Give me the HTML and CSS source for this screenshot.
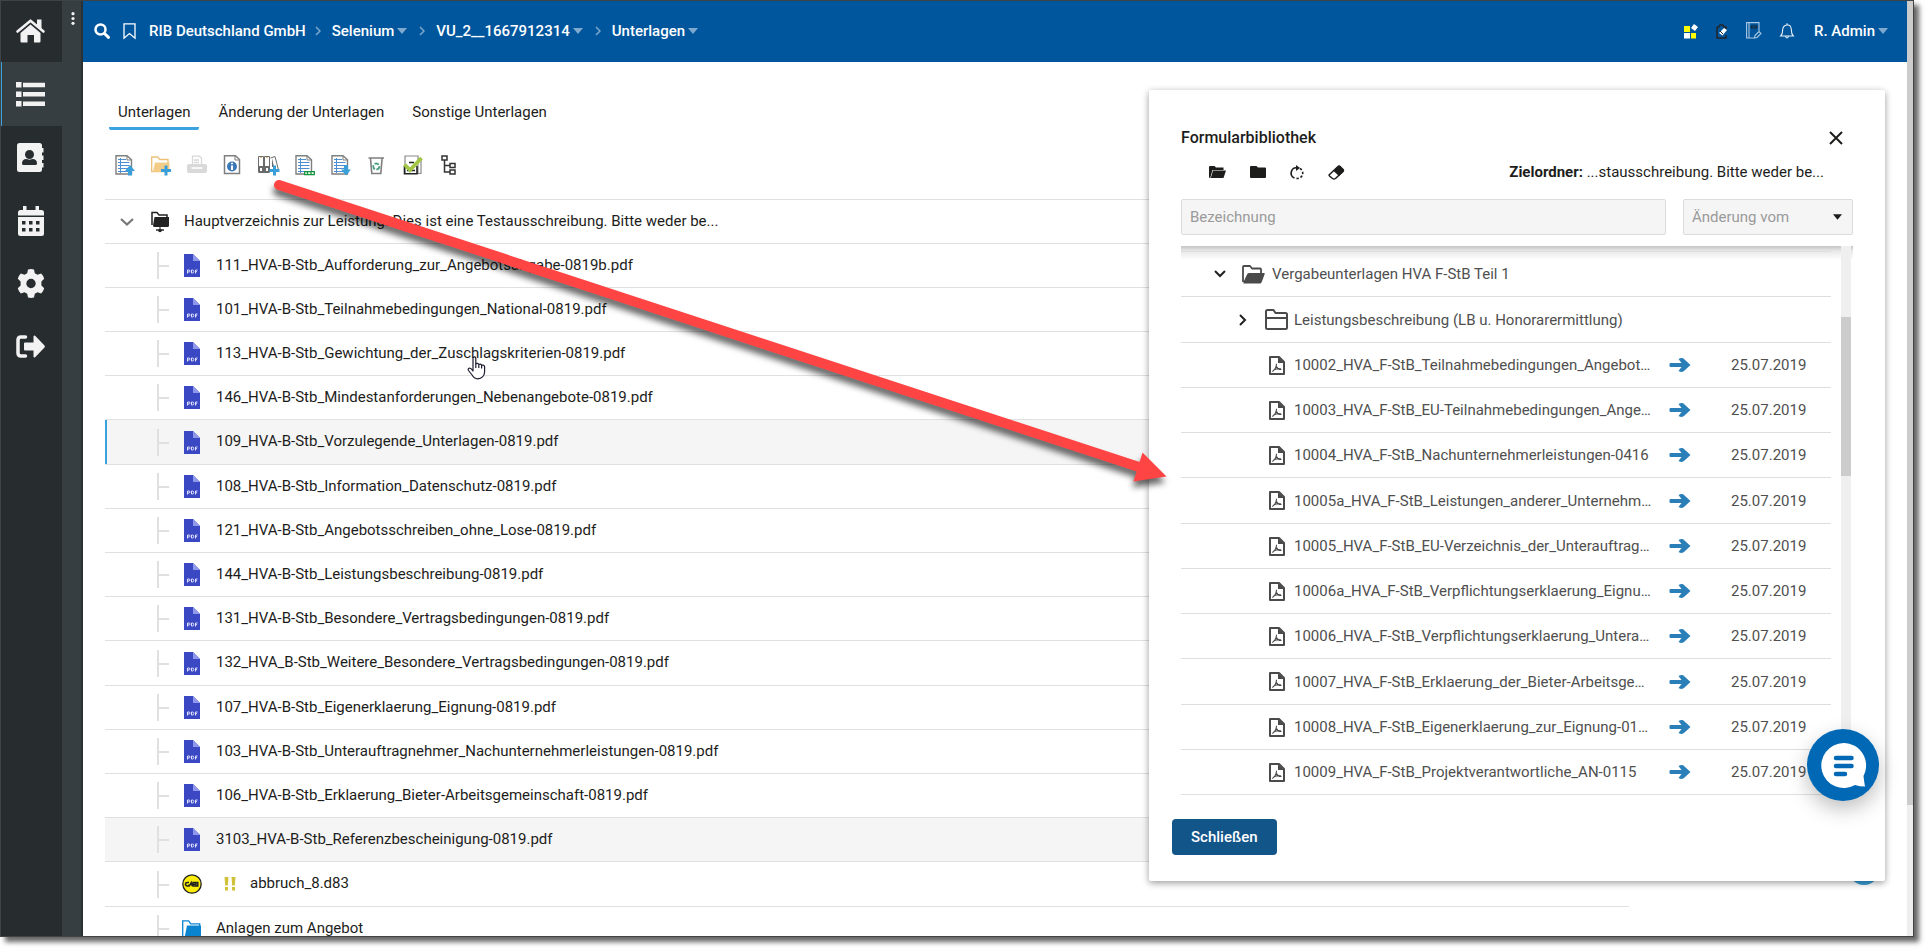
FILE: index.html
```html
<!DOCTYPE html>
<html lang="de">
<head>
<meta charset="utf-8">
<title>Unterlagen</title>
<link rel="stylesheet" href="styles.css">
</head>
<body>
<svg class="sprite" aria-hidden="true">
  <symbol id="pdf" viewBox="0 0 16 23">
    <path fill="#3b48c4" d="M0 0h9l7 7v16H0z"/><path fill="#8f98ea" d="M9 0l7 7H9z"/>
    <g fill="none" stroke="#dfe2fa" stroke-width="1"><path d="M3.500 19.500v-3.500h1.500a1 1 0 0 1 0 2H3.500M7.500 16v3h.8a1.500 1.500 0 0 0 0-3zM11.500 19.500V16h2M11.500 17.700h1.600"/></g>
  </symbol>
  <symbol id="fpdf" viewBox="0 0 16 19">
    <path fill="none" stroke="#4a4a4a" stroke-width="2" stroke-linejoin="round" d="M1 1h9l5 5v12H1z"/>
    <path fill="#4a4a4a" d="M9 1l6 6H9z"/>
    <path fill="none" stroke="#4a4a4a" stroke-width="1.100" d="M3.300 15.500c2-1 4.300-4.500 4.200-7.700M7.500 10.500c.8 2 2.500 3.200 5 3M4.500 14c2-1 4-1.600 7.500-1.200"/>
  </symbol>
  <symbol id="arrow" viewBox="0 0 21 14">
    <path fill="#2a7fb8" d="M1 5h11L9 1q4-2 6 .5L21 7l-6 5.500Q13 15 9 13l3-4H1Q0 9 0 7.500V6Q0 5 1 5z"/>
  </symbol>
  <symbol id="caret" viewBox="0 0 10 6"><path fill="currentColor" d="M0 0h10L5 6z"/></symbol>
  <symbol id="sep" viewBox="0 0 6 10"><path fill="none" stroke="currentColor" stroke-width="1.500" d="M1 1l4 4-4 4"/></symbol>
  <symbol id="sheet" viewBox="0 0 20 20">
    <path fill="#fff" stroke="#7f7f7f" stroke-width="1.400" d="M1 .7h11l4.500 4V19H1z"/><path fill="none" stroke="#7f7f7f" d="M12 1v4h4"/>
    <path fill="none" stroke="#4d8fd0" d="M3 4.500h8M3 7.500h11.500M3 10.500h11.500M3 13.500h11.500M3 16.500h11.500"/><path stroke="#4d8fd0" d="M5.500 3v15"/>
  </symbol>
</svg>

<div class="window">
  <nav class="rail" aria-label="Hauptnavigation">
    <a class="rail-item rail-home" href="#" aria-label="Start"><svg width="29" height="24" viewBox="0 0 29 24"><path fill="none" stroke="#f2f2f2" stroke-width="2.600" stroke-linecap="round" stroke-linejoin="round" d="M1.500 12.500l13-10.800 13 10.800"/><path fill="#f2f2f2" d="M21 .5h4.500V10L21 6.500zM4.500 14l10-8.500 10 8.500v8.500a1 1 0 0 1-1 1H18V16h-6.500v7.500h-6a1 1 0 0 1-1-1z"/></svg></a>
    <a class="rail-item rail-active" href="#" aria-label="Liste"><svg width="29" height="25" viewBox="0 0 29 25"><path fill="#f2f2f2" d="M0 0h5.500v5.500H0zM7 .7h22v4.500H7zM0 9.500h5.500V15H0zM7 10h22v4.500H7zM0 19h5.500v5.500H0zM7 19.500h22V24H7z"/></svg></a>
    <a class="rail-item" href="#" aria-label="Kontakte"><svg width="27" height="29" viewBox="0 0 27 29"><path fill="#f2f2f2" fill-rule="evenodd" d="M2.500 0h20A2.500 2.500 0 0 1 25 2.500V5h1.500v4.500H25v3h1.500V17H25v3h1.500v4.500H25v2a2.500 2.500 0 0 1-2.500 2.500h-20A2.500 2.500 0 0 1 0 26.500v-24A2.500 2.500 0 0 1 2.500 0zM12.500 7a4.500 4.500 0 1 0 .01 9 4.500 4.500 0 1 0 0-9zM5 20.500Q5 22 6.500 22h12q1.500 0 1.500-1.500 0-4.500-4.500-4.500l-3 .8-3-.8Q5 16 5 20.500z"/></svg></a>
    <a class="rail-item" href="#" aria-label="Kalender"><svg width="26" height="30" viewBox="0 0 26 30"><path fill="#f2f2f2" fill-rule="evenodd" d="M5 0h3.500v4h9V0H21v4h2.500A2.500 2.500 0 0 1 26 6.500V9.500H0v-3A2.500 2.500 0 0 1 2.500 4H5zM0 11h26v16.500a2.500 2.500 0 0 1-2.500 2.500h-21A2.500 2.500 0 0 1 0 27.500zM4 15v3.500h3.500V15zm7 0v3.500h3.500V15zm7 0v3.500h3.500V15zM4 22v3.500h3.500V22zm7 0v3.500h3.500V22zm7 0v3.500h3.500V22z"/></svg></a>
    <a class="rail-item" href="#" aria-label="Einstellungen"><svg width="28" height="29" viewBox="0 0 28 29"><g fill="#f2f2f2"><path fill-rule="evenodd" d="M11 0.500Q14 -.3 17 .5l.8 3.700 2.700 1.600 3.700-1.200q2.300 2.300 3 5.200l-2.800 2.600v4.200l2.800 2.600q-.8 3-3 5.200l-3.700-1.200-2.700 1.600-.8 3.700q-3 .8-6 0l-.8-3.700-2.700-1.600-3.700 1.200q-2.300-2.300-3-5.200l2.800-2.600v-4.200L.8 9.800q.8-3 3-5.200l3.700 1.200 2.700-1.600zM14 9.800a4.700 4.700 0 1 0 .01 9.400A4.700 4.700 0 1 0 14 9.800z"/></g></svg></a>
    <a class="rail-item" href="#" aria-label="Abmelden"><svg width="29" height="23" viewBox="0 0 29 23"><path fill="none" stroke="#f2f2f2" stroke-width="3.500" stroke-linecap="round" d="M9.500 2H5Q2 2 2 5v13q0 3 3 3h4.500"/><path fill="#f2f2f2" d="M9 7.500h8.500V1.200q.6-1 1.600-.4L28.500 10.500q.8 1 0 2L19.100 22.200q-1 .6-1.600-.4V15.500H9q-1 0-1-1v-6q0-1 1-1z"/></svg></a>
  </nav>
  <div class="gutter"><button class="dots" aria-label="Mehr"><svg width="4" height="13" viewBox="0 0 4 13"><g fill="#f2f2f2"><circle cx="2" cy="1.700" r="1.600"/><circle cx="2" cy="6.500" r="1.600"/><circle cx="2" cy="11.300" r="1.600"/></g></svg></button></div>

  <div class="main">
    <header class="topbar">
      <button class="icon-btn" aria-label="Suche"><svg width="16" height="16" viewBox="0 0 16 16"><circle cx="6.500" cy="6.500" r="5" fill="none" stroke="#fff" stroke-width="2.500"/><path stroke="#fff" stroke-width="3" stroke-linecap="round" d="M10.500 10.500l4 3.800"/></svg></button>
      <button class="icon-btn mark" aria-label="Lesezeichen"><svg width="13" height="16" viewBox="0 0 13 16"><path fill="none" stroke="#fff" stroke-width="1.300" d="M1 .8h11v14.400L6.500 10.500 1 15.200z"/></svg></button>
      <ol class="crumbs">
        <li><a href="#">RIB Deutschland GmbH</a></li>
        <li><svg class="sep"><use href="#sep"/></svg><a href="#">Selenium</a><svg class="caret"><use href="#caret"/></svg></li>
        <li><svg class="sep"><use href="#sep"/></svg><a href="#">VU_2__1667912314</a><svg class="caret"><use href="#caret"/></svg></li>
        <li><svg class="sep"><use href="#sep"/></svg><a href="#">Unterlagen</a><svg class="caret"><use href="#caret"/></svg></li>
      </ol>
      <div class="top-actions">
        <button class="icon-btn" aria-label="Apps"><svg width="14" height="16" viewBox="0 0 14 16"><path fill="#ff0" d="M0 3h6v6H0zM7 10h5v5.500H7z"/><path fill="#fff" d="M0 10h6v5.500H0zM10 1l4 3-3 4-4-3z"/></svg></button>
        <button class="icon-btn" aria-label="Aufgaben"><svg width="12" height="16" viewBox="0 0 12 16"><path fill="none" stroke="#20262b" stroke-width="1.500" d="M1 4h2l1-2h3l1 2h2v3M1 4v11h9v-3"/><path fill="#fff" d="M3 10l5-5 3 2-4.500 5.500z"/><path stroke="#20262b" d="M4 8l3 3"/></svg></button>
        <button class="icon-btn" aria-label="Protokoll"><svg width="16" height="17" viewBox="0 0 16 17"><path fill="none" stroke="#a9c8e4" stroke-width="1.100" d="M8 16H.6V.6H13v9M3 .6V16M9 13.500l4-4 2 2-4 4-2.500.5z"/><path fill="none" stroke="#1b2730" stroke-width="1.200" d="M5.500 4h5v2h-5z"/></svg></button>
        <button class="icon-btn" aria-label="Benachrichtigungen"><svg width="14" height="16" viewBox="0 0 14 16"><path fill="none" stroke="#e8f1f8" stroke-width="1.100" d="M.7 13q2-2 2-6.500Q3 2.500 7 2t4.300 4.500Q11.300 11 13.300 13zM5.500 13.500q1.500 3 3 0M7 .3V2"/></svg></button>
        <button class="user">R. Admin<svg class="caret"><use href="#caret"/></svg></button>
      </div>
    </header>

    <main class="content">
      <nav class="tabs" aria-label="Bereiche">
        <a class="tab tab-active" href="#">Unterlagen</a>
        <a class="tab" href="#">Änderung der Unterlagen</a>
        <a class="tab" href="#">Sonstige Unterlagen</a>
      </nav>
      <div class="tools">
        <button class="tool" aria-label="Hochladen"><svg viewBox="0 0 20 20"><use href="#sheet"/><path fill="#3a9fd8" d="M15 10l5 6h-3v4.500h-4V16h-3z"/></svg></button>
        <button class="tool" aria-label="Neuer Ordner"><svg viewBox="0 0 20 20"><path fill="#fff" stroke="#edc078" stroke-width="1.300" d="M.7 16.500V2h6l2 2.500H17v12z"/><path fill="#f3cd88" d="M4 7.500h14.500V17H2z"/><path fill="#3a9fd8" d="M13.500 10.500h3v3.500H20v3h-3.500v3.500h-3V17H10v-3h3.500z"/></svg></button>
        <button class="tool" aria-label="Drucken"><svg viewBox="0 0 20 20"><path fill="none" stroke="#d9d9d9" stroke-width="1.300" d="M5.500 9V1.200h7l2 2V9M7 5h5M7 7.500h5"/><rect y="9" width="20" height="9" rx="2" fill="#d9d9d9"/><path stroke="#fff" stroke-width="1.500" d="M4.500 13h11"/></svg></button>
        <button class="tool" aria-label="Info"><svg viewBox="0 0 20 20"><path fill="#fff" stroke="#7f7f7f" stroke-width="1.500" d="M1.500 .8h11l4 3.700v14h-15z"/><path fill="none" stroke="#7f7f7f" d="M12 1v4h4"/><circle cx="9" cy="11.500" r="5" fill="#3d78b8"/><path stroke="#fff" stroke-width="2" d="M9 10.500V15M9 7.700v1.600"/></svg></button>
        <button class="tool" aria-label="Formularbibliothek"><svg viewBox="0 0 20 20"><path fill="#fff" stroke="#6b6b6b" d="M-.5 1.500h5V17h-5zM5.500 1.500h5V17h-5zM11.500 3L16 1.500 19.500 15"/><path fill="#6b6b6b" d="M-.5 11h11v7h-11zM13 3v9h2z"/><path fill="#fff" d="M1 13h2v3H1zM7 13h2v3H7z"/><path stroke="#f1c27a" d="M1 2.500h2M7 2.500h2"/><path fill="#3a9fd8" d="M14 10.500h3V14h3.500v3H17v3.500h-3V17h-3.500v-3H14z"/></svg></button>
        <button class="tool" aria-label="Liste prüfen"><svg viewBox="0 0 20 20"><use href="#sheet"/><path fill="#f5fff8" stroke="#14943f" stroke-width="1.300" d="M9.700 16.700h9.600v3H9.700zM12.500 16.500v3M16 16.500v3"/></svg></button>
        <button class="tool" aria-label="Herunterladen"><svg viewBox="0 0 20 20"><use href="#sheet"/><path fill="#3a9fd8" d="M15 20.500l-5-6h3V10h4v4.500h3z"/></svg></button>
        <button class="tool" aria-label="Löschen"><svg viewBox="0 0 20 20"><path fill="none" stroke="#7f7f7f" stroke-width="1.600" d="M1.500 3h15.500M3.500 3.500l1.300 15h9l1.300-15"/><circle cx="9.300" cy="11.500" r="3" fill="none" stroke="#48a07d" stroke-width="1.800" stroke-dasharray="4.500 1.500"/></svg></button>
        <button class="tool" aria-label="Bestätigen"><svg viewBox="0 0 20 20"><path fill="#fff" stroke="#8a8a8a" stroke-width="1.200" d="M2 1h13v17.500H2zM15 4h3v14.500h-3"/><path fill="none" stroke="#222" stroke-width="1.600" d="M1.500 11v7.700h12.500V11M4 15.500h8M6 7.500h5"/><path fill="none" stroke="#a3c644" stroke-width="3.800" d="M1.500 9.500L7 15 18.500 3"/></svg></button>
        <button class="tool" aria-label="Struktur"><svg viewBox="0 0 20 20"><path fill="none" stroke="#333" stroke-width="1.500" d="M3 1h5v4H3zM11 8.500h5v4h-5zM11 15h5v4h-5zM5.500 5v12H11M5.500 10.500H11"/></svg></button>
      </div>
      <ul class="tree">
        <li class="node root"><button class="twist" aria-label="Einklappen"><svg width="14" height="8" viewBox="0 0 14 8"><path fill="none" stroke="#777" stroke-width="2.200" d="M1 1l6 5.500L13 1"/></svg></button><svg class="root-icon" width="18" height="22" viewBox="0 0 18 22"><path fill="none" stroke="#222" stroke-width="1.500" d="M1 14V1.500h5L8 4h8v3"/><path fill="#222" d="M3.500 6H18v8.500q0 1.500-1.500 1.500h-13Q2 16 2 14.500zM8.500 16h1v2h-1z"/><path stroke="#222" stroke-width="1.400" d="M5 19h8"/><circle cx="9" cy="19.500" r="1.800" fill="#222"/></svg><span>Hauptverzeichnis zur Leistung. Dies ist eine Testausschreibung. Bitte weder be...</span></li>
        <li class="node"><i class="branch"></i><svg class="pdf"><use href="#pdf"/></svg><span>111_HVA-B-Stb_Aufforderung_zur_Angebotsabgabe-0819b.pdf</span></li>
        <li class="node"><i class="branch"></i><svg class="pdf"><use href="#pdf"/></svg><span>101_HVA-B-Stb_Teilnahmebedingungen_National-0819.pdf</span></li>
        <li class="node"><i class="branch"></i><svg class="pdf"><use href="#pdf"/></svg><span>113_HVA-B-Stb_Gewichtung_der_Zuschlagskriterien-0819.pdf</span></li>
        <li class="node"><i class="branch"></i><svg class="pdf"><use href="#pdf"/></svg><span>146_HVA-B-Stb_Mindestanforderungen_Nebenangebote-0819.pdf</span></li>
        <li class="node selected"><i class="branch"></i><svg class="pdf"><use href="#pdf"/></svg><span>109_HVA-B-Stb_Vorzulegende_Unterlagen-0819.pdf</span></li>
        <li class="node"><i class="branch"></i><svg class="pdf"><use href="#pdf"/></svg><span>108_HVA-B-Stb_Information_Datenschutz-0819.pdf</span></li>
        <li class="node"><i class="branch"></i><svg class="pdf"><use href="#pdf"/></svg><span>121_HVA-B-Stb_Angebotsschreiben_ohne_Lose-0819.pdf</span></li>
        <li class="node"><i class="branch"></i><svg class="pdf"><use href="#pdf"/></svg><span>144_HVA-B-Stb_Leistungsbeschreibung-0819.pdf</span></li>
        <li class="node"><i class="branch"></i><svg class="pdf"><use href="#pdf"/></svg><span>131_HVA-B-Stb_Besondere_Vertragsbedingungen-0819.pdf</span></li>
        <li class="node"><i class="branch"></i><svg class="pdf"><use href="#pdf"/></svg><span>132_HVA_B-Stb_Weitere_Besondere_Vertragsbedingungen-0819.pdf</span></li>
        <li class="node"><i class="branch"></i><svg class="pdf"><use href="#pdf"/></svg><span>107_HVA-B-Stb_Eigenerklaerung_Eignung-0819.pdf</span></li>
        <li class="node"><i class="branch"></i><svg class="pdf"><use href="#pdf"/></svg><span>103_HVA-B-Stb_Unterauftragnehmer_Nachunternehmerleistungen-0819.pdf</span></li>
        <li class="node"><i class="branch"></i><svg class="pdf"><use href="#pdf"/></svg><span>106_HVA-B-Stb_Erklaerung_Bieter-Arbeitsgemeinschaft-0819.pdf</span></li>
        <li class="node marked"><i class="branch"></i><svg class="pdf"><use href="#pdf"/></svg><span>3103_HVA-B-Stb_Referenzbescheinigung-0819.pdf</span></li>
        <li class="node"><i class="branch"></i><svg class="gaeb" width="20" height="20" viewBox="0 0 20 20"><circle cx="10" cy="10" r="9.200" fill="#ffee0a" stroke="#222" stroke-width="1.300"/><path fill="none" stroke="#222" stroke-width="1.500" d="M7 8.500H5.500q-2 0-2 1.700t2 1.700H7v-1.500M7.500 12l1.700-3.500 1 3.500M13.500 8.500H11v3.400h2.500M11 10.200h2.500M14 8.500h1.800v3.400H14z"/></svg><svg class="warn" width="12" height="14" viewBox="0 0 12 14"><path fill="#d0c238" d="M0.500 0h4l-.7 8.500H1.200zM7.500 0h4l-.7 8.500H8.200zM1 10h3v3.500H1zM8 10h3v3.500H8z"/></svg><span>abbruch_8.d83</span></li>
        <li class="node"><i class="branch"></i><svg class="folder" width="19" height="18" viewBox="0 0 19 18"><path fill="none" stroke="#0b84d0" stroke-width="1.300" d="M.7 17V.8h6l2 3h9V6"/><path fill="#0b84d0" d="M5 5.500h14V16q0 2-2 2H2.500z"/></svg><span>Anlagen zum Angebot</span></li>
      </ul>
    </main>
  </div>
  <div class="page-scroll"><div class="page-thumb"></div></div>

  <div class="round-tip"></div>

  <section class="dialog" role="dialog" aria-labelledby="dlg-title">
    <div class="dlg-head"><h2 id="dlg-title">Formularbibliothek</h2><button class="close" aria-label="Fenster schließen"><svg width="14" height="14" viewBox="0 0 14 14"><path stroke="#1d1d1b" stroke-width="2" d="M1 1l12 12M13 1L1 13"/></svg></button></div>
    <div class="dlg-tools">
      <button aria-label="Alle öffnen"><svg width="17" height="13" viewBox="0 0 17 13"><path fill="#1d1d1b" d="M1 0h4.500l1.500 1.500h7.500V4H3.500L1.500 11V12H1Q0 12 0 11V1Q0 0 1 0z"/><path fill="#1d1d1b" d="M4 4.500h13L14.500 12H1.800z"/></svg></button>
      <button aria-label="Alle schließen"><svg width="16" height="13" viewBox="0 0 16 13"><path fill="#1d1d1b" d="M1 0h5.500L8 1.500h7q1 0 1 1V11q0 1-1 1H1q-1 0-1-1V1q0-1 1-1z"/></svg></button>
      <button aria-label="Aktualisieren"><svg width="14" height="15" viewBox="0 0 14 15"><path fill="none" stroke="#1d1d1b" stroke-width="1.600" d="M7 2.800A5.300 5.300 0 0 0 4.500 13"/><path fill="none" stroke="#1d1d1b" stroke-width="1.600" stroke-dasharray="2.300 1.800" d="M6.500 13.400A5.300 5.300 0 0 0 9.500 3.300"/><path fill="#1d1d1b" d="M6 0l4 3-4 3z"/></svg></button>
      <button aria-label="Filter leeren"><svg width="17" height="15" viewBox="0 0 17 15"><path fill="none" stroke="#1d1d1b" stroke-width="1.500" stroke-linejoin="round" d="M1 10L10 1.500q1-1 2 0l3 3q1 1 0 2L7.500 13.500q-1.500 1-3 0L1.500 11z"/><path fill="#1d1d1b" d="M10.500.8h1.500l4 4v1.500l-5 4.700L5.500 6z"/></svg></button>
      <p class="target"><strong>Zielordner:</strong> ...stausschreibung. Bitte weder be...</p>
    </div>
    <div class="filters">
      <input class="field" type="text" placeholder="Bezeichnung" aria-label="Bezeichnung">
      <div class="select-wrap"><select class="field" aria-label="Änderung vom"><option>Änderung vom</option></select><svg class="select-caret"><use href="#caret"/></svg></div>
    </div>
    <div class="lib">
      <ul class="lib-list">
        <li class="entry folder-open"><svg width="12" height="8" viewBox="0 0 12 8"><path fill="none" stroke="#222" stroke-width="2" d="M1 1l5 5 5-5"/></svg><svg width="23" height="19" viewBox="0 0 23 19"><path fill="none" stroke="#4a4a4a" stroke-width="1.800" stroke-linejoin="round" d="M1 17V2q0-1 1-1h6l2 2.500h8q1 0 1 1V8"/><path fill="#4a4a4a" d="M7 8h15q1 0 .7 1l-3 8q-.5 1.500-2 1.500H2Q1 18.500 1.500 17L5 9.500Q5.500 8 7 8z"/></svg><span>Vergabeunterlagen HVA F-StB Teil 1</span></li>
        <li class="entry folder-closed"><svg width="8" height="12" viewBox="0 0 8 12"><path fill="none" stroke="#222" stroke-width="2" d="M1 1l5 5-5 5"/></svg><svg width="23" height="21" viewBox="0 0 23 21"><path fill="none" stroke="#4a4a4a" stroke-width="2" stroke-linejoin="round" d="M1 18.500V2.500Q1 1 2.500 1h6l2 3h10q1.500 0 1.500 1.500v13q0 1.500-1.500 1.500h-18Q1 20 1 18.500zM1 9h21"/></svg><span>Leistungsbeschreibung (LB u. Honorarermittlung)</span></li>
        <li class="entry"><svg class="fpdf"><use href="#fpdf"/></svg><span class="name">10002_HVA_F-StB_Teilnahmebedingungen_Angebot…</span><button class="add" aria-label="Übernehmen"><svg><use href="#arrow"/></svg></button><time>25.07.2019</time></li>
        <li class="entry"><svg class="fpdf"><use href="#fpdf"/></svg><span class="name">10003_HVA_F-StB_EU-Teilnahmebedingungen_Ange…</span><button class="add" aria-label="Übernehmen"><svg><use href="#arrow"/></svg></button><time>25.07.2019</time></li>
        <li class="entry"><svg class="fpdf"><use href="#fpdf"/></svg><span class="name">10004_HVA_F-StB_Nachunternehmerleistungen-0416</span><button class="add" aria-label="Übernehmen"><svg><use href="#arrow"/></svg></button><time>25.07.2019</time></li>
        <li class="entry"><svg class="fpdf"><use href="#fpdf"/></svg><span class="name">10005a_HVA_F-StB_Leistungen_anderer_Unternehm…</span><button class="add" aria-label="Übernehmen"><svg><use href="#arrow"/></svg></button><time>25.07.2019</time></li>
        <li class="entry"><svg class="fpdf"><use href="#fpdf"/></svg><span class="name">10005_HVA_F-StB_EU-Verzeichnis_der_Unterauftrag…</span><button class="add" aria-label="Übernehmen"><svg><use href="#arrow"/></svg></button><time>25.07.2019</time></li>
        <li class="entry"><svg class="fpdf"><use href="#fpdf"/></svg><span class="name">10006a_HVA_F-StB_Verpflichtungserklaerung_Eignu…</span><button class="add" aria-label="Übernehmen"><svg><use href="#arrow"/></svg></button><time>25.07.2019</time></li>
        <li class="entry"><svg class="fpdf"><use href="#fpdf"/></svg><span class="name">10006_HVA_F-StB_Verpflichtungserklaerung_Untera…</span><button class="add" aria-label="Übernehmen"><svg><use href="#arrow"/></svg></button><time>25.07.2019</time></li>
        <li class="entry"><svg class="fpdf"><use href="#fpdf"/></svg><span class="name">10007_HVA_F-StB_Erklaerung_der_Bieter-Arbeitsge…</span><button class="add" aria-label="Übernehmen"><svg><use href="#arrow"/></svg></button><time>25.07.2019</time></li>
        <li class="entry"><svg class="fpdf"><use href="#fpdf"/></svg><span class="name">10008_HVA_F-StB_Eigenerklaerung_zur_Eignung-01…</span><button class="add" aria-label="Übernehmen"><svg><use href="#arrow"/></svg></button><time>25.07.2019</time></li>
        <li class="entry"><svg class="fpdf"><use href="#fpdf"/></svg><span class="name">10009_HVA_F-StB_Projektverantwortliche_AN-0115</span><button class="add" aria-label="Übernehmen"><svg><use href="#arrow"/></svg></button><time>25.07.2019</time></li>
      </ul>
      <div class="lib-track"><div class="lib-thumb"></div></div>
    </div>
    <div class="dlg-foot"><button class="primary">Schließen</button></div>
  </section>

  <button class="chat" aria-label="Chat"><svg width="45" height="45" viewBox="0 0 45 45"><path fill="#fff" d="M22.500 0a22.500 22.500 0 0 1 20 33q.5 5 1.500 10.500-5 0-10-1.500A22.500 22.500 0 1 1 22.500 0z"/><path stroke="#0068b4" stroke-width="4.500" stroke-linecap="round" d="M15 15h15.500M15 23h15.500M15 31h9"/></svg></button>

  <svg class="pointer-arrow" width="920" height="330" viewBox="0 0 920 330" aria-hidden="true"><g fill="#ff4444"><path stroke="#ff4444" stroke-width="10" stroke-linecap="round" d="M18 15l863 283"/><path d="M881.500 282.500l24 24-33 5z"/></g></svg>
  <svg class="hand" width="19" height="24" viewBox="0 0 19 24" aria-hidden="true"><path fill="#fff" stroke="#1a1a2e" stroke-width="1.200" stroke-linejoin="round" d="M6 14V2.500q0-1.700 1.400-1.700T8.800 2.500V8q2-1.500 3 .5 2-1 2.800.7 2.600-.7 3 1.500V16q-.6 6.500-7 6.800-3.500 0-5.500-3.800L1.500 14.500Q.5 12.500 2.500 12q1.500 0 3.500 3zM8.800 8v4M11.800 9v3M14.600 9.500v3"/></svg>
</div>
</body>
</html>
```

FILE: styles.css
```css
* { box-sizing: border-box; }
body { margin: 0; background: #fff; color: #1d1d1b; font: 15px/20px Roboto, "Liberation Sans", sans-serif; }
button { margin: 0; padding: 0; border: 0; background: none; font: inherit; color: inherit; }
a { color: inherit; text-decoration: none; }
ul, ol { margin: 0; padding: 0; list-style: none; }
svg { display: block; flex: none; overflow: visible; }
.sprite { position: absolute; width: 0; height: 0; }

.window { position: relative; display: flex; height: calc(100vh - 15px); margin: 0 15px 15px 0; border: 1px solid #3f4345; background: #fff; box-shadow: 5px 5px 5px rgba(0, 0, 0, .6); }

.rail { flex: none; width: 61px; background: #272c2f; overflow: hidden; }
.rail-item { display: flex; align-items: center; justify-content: center; height: 63px; padding-right: 2px; }
.rail-home { height: 61px; padding-bottom: 1px; }
.rail-active { height: 64px; margin-right: -1px; background: #373e41; border-left: 1px solid #3ba2e0; padding-right: 4px; }
.gutter { flex: none; width: 21px; background: #373e41; border-right: 2px solid #2b3033; }
.dots { display: block; margin: 11px 0 0 9px; }

.main { flex: 1; min-width: 0; overflow: hidden; }
.topbar { display: flex; align-items: center; height: 61px; padding: 0 19px 2px 11px; background: #00569d; color: #fff; font-weight: 500; }
.mark { margin-left: 13px; }
.crumbs { display: flex; margin-left: 13px; }
.crumbs li { display: flex; align-items: center; }
.sep { width: 6px; height: 10px; margin: 0 11px 0 9px; color: #7fa9cf; }
.caret { width: 10px; height: 6px; margin-left: 3px; color: #7fa9cf; }
.crumbs .caret { margin-right: 3px; }
.top-actions { display: flex; align-items: center; gap: 18px; margin-left: auto; }
.user { display: flex; align-items: center; margin-left: 2px; }

.content { padding: 38px 278px 0 22px; }
.tabs { display: flex; gap: 10px; padding-left: 4px; }
.tab { padding: 2px 9px 5px; border-bottom: 3px solid transparent; border-radius: 2px; }
.tab-active { border-color: #3ba2e0; }
.tools { display: flex; gap: 16px; margin: 25px 0 24px; padding-left: 10px; }
.tool, .tool svg { display: block; width: 20px; height: 20px; }

.node { display: flex; align-items: center; height: 44px; padding-left: 52px; border-top: 1px solid #e0e0e0; white-space: nowrap; }
.node:nth-child(5n + 6) { height: 45px; }
.node span { padding-bottom: 2px; }
.root { padding-left: 15px; }
.root-icon { margin: 0 15px 0 17px; }
.selected { background: #f5f5f5; box-shadow: inset 2px 0 #3ba2e0; }
.marked { background: #f5f5f5; }
.branch { position: relative; width: 12px; height: 27px; margin-right: 15px; border-left: 2px solid #e0e0e0; }
.branch::after { content: ""; position: absolute; left: 0; top: 13px; width: 10px; height: 2px; background: #e0e0e0; }
.pdf { width: 16px; height: 23px; margin-right: 16px; }
.gaeb { margin: 0 22px 0 -2px; }
.warn { margin-right: 14px; }
.folder { margin: 0 15px 0 -2px; }

.page-scroll { flex: none; width: 6px; background: #eee; }
.page-thumb { height: 86%; background: #ccc; }

.round-tip { position: absolute; right: 33px; top: 852px; width: 32px; height: 32px; border-radius: 50%; background: #3a9fd8; }

.dialog { position: absolute; top: 89px; right: 28px; width: 736px; padding-top: 36px; border-radius: 2px; background: #fff; box-shadow: 0 2px 7px rgba(0, 0, 0, .4); }
.dlg-head, .dlg-tools, .filters { display: flex; align-items: center; margin: 0 32px; }
.dlg-head { justify-content: space-between; height: 24px; padding-right: 10px; }
h2 { margin: 0; font-size: 16px; font-weight: 500; }
.dlg-tools { gap: 24px; height: 22px; margin-top: 11px; padding: 0 29px 0 28px; }
.target { margin: 0 0 0 auto; }
.filters { gap: 17px; margin-top: 16px; }
.field { width: 100%; height: 36px; padding: 0 8px; border: 1px solid #dcdcdc; border-radius: 2px; background: #f5f5f5; color: #9a9a9a; font: inherit; appearance: none; }
.field::placeholder { color: #9a9a9a; opacity: 1; }
.filters > input { flex: 1; min-width: 0; }
.select-wrap { position: relative; flex: none; width: 170px; }
.select-caret { position: absolute; right: 11px; top: 15px; width: 9px; height: 6px; pointer-events: none; color: #1d1d1b; }

.lib { display: flex; gap: 10px; margin: 11px 32px 0; padding-right: 2px; color: #4f4f4f; background: linear-gradient(#c4c4c4, #e8e8e8 5px, #fff 14px); }
.lib-list { flex: 1; min-width: 0; padding-top: 5px; border-bottom: 1px solid #e0e0e0; }
.entry { display: flex; align-items: center; height: 45px; padding: 0 25px 0 88px; border-top: 1px solid #dedede; white-space: nowrap; }
.entry:nth-child(4n + 2) { height: 46px; }
.folder-open { padding-left: 33px; gap: 16px; }
.folder-open span { margin-left: -9px; }
.folder-closed { padding-left: 58px; gap: 18px; }
.folder-closed span { margin-left: -12px; }
.fpdf { width: 16px; height: 19px; margin-right: 9px; }
.name { flex: 1; min-width: 0; overflow: hidden; text-overflow: ellipsis; }
.add { margin: 0 40px 0 8px; }
.add svg { width: 22px; height: 14px; }
time { width: 75px; }
.lib-track { flex: none; width: 10px; padding-top: 71px; background: #efefef; }
.lib-thumb { height: 159px; background: #ccc; }
.dlg-foot { padding: 24px 23px 26px; }
.primary { display: block; height: 36px; padding: 0 19px; border-radius: 4px; background: #125589; color: #fff; font-weight: 500; }

.chat { position: absolute; right: 34px; top: 728px; display: flex; align-items: center; justify-content: center; width: 72px; height: 72px; border-radius: 50%; background: #0068b4; box-shadow: 0 8px 20px rgba(0, 0, 0, .25); }
.pointer-arrow { position: absolute; left: 260px; top: 169px; pointer-events: none; filter: drop-shadow(-1px 6px 3px rgba(0, 0, 0, .6)); }
.hand { position: absolute; left: 466px; top: 355px; pointer-events: none; }
```
